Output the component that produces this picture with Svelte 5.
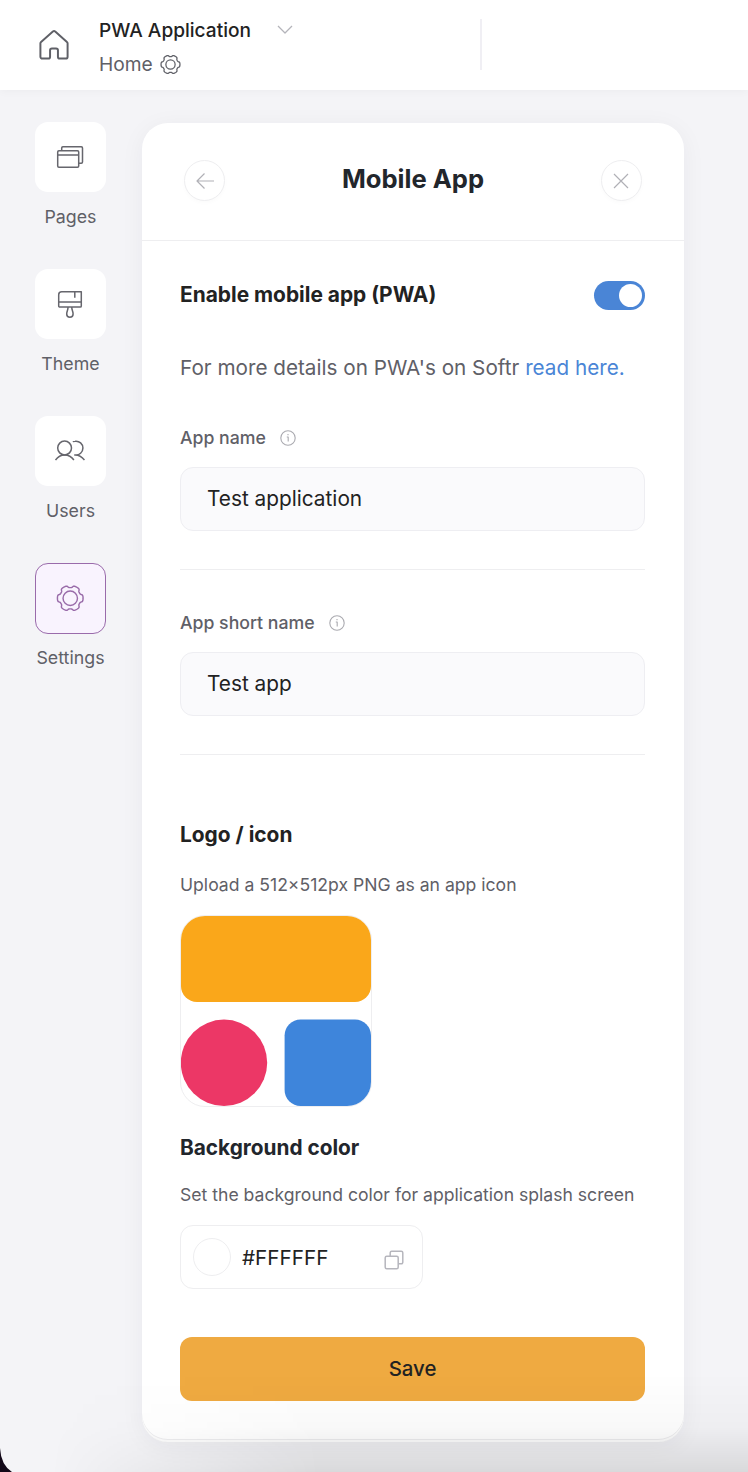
<script lang="ts">
  let enabled = true;
  let appName = 'Test application';
  let shortName = 'Test app';
  let color = '#FFFFFF';

  const menu = [
    { id: 'pages', label: 'Pages' },
    { id: 'theme', label: 'Theme' },
    { id: 'users', label: 'Users' },
    { id: 'settings', label: 'Settings' },
  ];
  let active = 'settings';

  // outline of the six-lobed gear, on a 30x30 box
  const gear = Array.from({ length: 120 }, (_, i) => {
    const a = (i / 120) * Math.PI * 2;
    const r = 12.3 + 1.2 * Math.tanh(2.6 * Math.cos(6 * a) + 0.9);
    return `${(15 + r * Math.cos(a)).toFixed(2)},${(15 + r * Math.sin(a)).toFixed(2)}`;
  }).join(' ');
</script>

<div class="page">
  <header class="topbar">
    <svg class="home" width="30" height="32" viewBox="0 0 32 34">
      <path
        d="M3.5 31.5a2 2 0 0 1-2-2V15.2a2 2 0 0 1 .7-1.5L14.8 2.5a2 2 0 0 1 2.5 0l12.5 11.2a2 2 0 0 1 .7 1.5v14.3a2 2 0 0 1-2 2h-6.3a2 2 0 0 1-2-2v-6.8a2 2 0 0 0-2-2h-4.400a2 2 0 0 0-2 2v6.800a2 2 0 0 1-2 2z"
      />
    </svg>
    <div class="names">
      <div class="app">
        <span>PWA Application</span>
        <svg class="chevron" width="16" height="10" viewBox="0 0 16 10">
          <path d="M1 1l7 7 7-7" />
        </svg>
      </div>
      <div class="current">
        <span>Home</span>
        <svg class="gear" width="21" height="21" viewBox="0 0 30 30">
          <polygon points={gear} />
          <circle cx="15" cy="15" r="6.6" />
        </svg>
      </div>
    </div>
    <div class="separator"></div>
  </header>

  <div class="content">
    <nav class="sidebar">
      {#each menu as item}
        <div class="item">
          <button
            class="tile"
            class:active={active === item.id}
            aria-label={item.label}
            on:click={() => (active = item.id)}
          >
            {#if item.id === 'pages'}
              <svg width="30" height="30" viewBox="0 0 30 30">
                <rect x="2.7" y="8.7" width="21" height="16.6" rx="1.2" />
                <path d="M2.7 13h21M6.7 8.7V6a1.2 1.2 0 0 1 1.2-1.2h18.4A1.2 1.2 0 0 1 27.5 6v14a1.2 1.2 0 0 1-1.2 1.2h-2.6" />
              </svg>
            {:else if item.id === 'theme'}
              <svg width="30" height="30" viewBox="0 0 30 30">
                <path d="M6.7 2.7h19.6v14.2a1.1 1.1 0 0 1-1.1 1.1H4.8a1.1 1.1 0 0 1-1.1-1.1V5.7a3 3 0 0 1 3-3zM3.7 13h22.6M19.8 2.7v6" />
                <path d="M13 18c.2 3-1.3 4.3-1.3 7a3.2 3.2 0 0 0 6.4 0c0-2.7-1.5-4-1.3-7" />
              </svg>
            {:else if item.id === 'users'}
              <svg width="30" height="30" viewBox="0 0 30 30">
                <circle cx="9.6" cy="12" r="6.9" />
                <path d="M.5 24c2.3-3.3 5.3-5.1 9.1-5.1s7 1.8 9.3 5.1M17.8 5.6a7 7 0 0 1 2.4-.4 6.9 6.9 0 1 1 0 13.7h-1M20.2 18.9c3.8 0 6.7 1.8 9.3 5.1" />
              </svg>
            {:else}
              <svg width="28.5" height="28.5" viewBox="0 0 30 30">
                <polygon points={gear} />
                <circle cx="15" cy="15" r="7.6" />
              </svg>
            {/if}
          </button>
          <span class="label">{item.label}</span>
        </div>
      {/each}
    </nav>

    <main class="panel">
      <div class="panel-head">
        <button class="round" aria-label="Back">
          <svg width="20" height="20" viewBox="0 0 20 20">
            <path d="M19 10H2M9.500 2.500L2 10l7.500 7.500" />
          </svg>
        </button>
        <h1>Mobile App</h1>
        <button class="round close" aria-label="Close">
          <svg width="20" height="20" viewBox="0 0 20 20">
            <path d="M3 3l14 14M17 3L3 17" />
          </svg>
        </button>
      </div>

      <div class="panel-body">
        <div class="enable">
          <h2>Enable mobile app (PWA)</h2>
          <button
            class="toggle"
            class:on={enabled}
            aria-label="Enable mobile app"
            on:click={() => (enabled = !enabled)}
          >
            <span class="knob"></span>
          </button>
        </div>

        <p class="details">
          For more details on PWA's on Softr <a href="#pwa">read here.</a>
        </p>

        <div class="field">
          <label for="app-name">
            App name
            <svg width="16" height="16" viewBox="0 0 16 16">
              <circle cx="8" cy="8" r="7.2" />
              <path d="M6.8 7h1.4v4.5M8 4v1.3" />
            </svg>
          </label>
          <input id="app-name" bind:value={appName} />
        </div>

        <div class="field">
          <label for="short-name">
            App short name
            <svg width="16" height="16" viewBox="0 0 16 16">
              <circle cx="8" cy="8" r="7.2" />
              <path d="M6.8 7h1.4v4.5M8 4v1.3" />
            </svg>
          </label>
          <input id="short-name" bind:value={shortName} />
        </div>

        <h2 class="logo-title">Logo / icon</h2>
        <p class="hint">Upload a 512×512px PNG as an app icon</p>
        <div class="logo">
          <svg width="190" height="190" viewBox="0 0 190 190">
            <rect width="190" height="86" rx="16" fill="#faa71a" />
            <circle cx="43" cy="146.8" r="43.2" fill="#ec3766" />
            <rect x="103.6" y="103.6" width="86.4" height="86.4" rx="16" fill="#3e85db" />
          </svg>
        </div>

        <h2 class="color-title">Background color</h2>
        <p class="hint">Set the background color for application splash screen</p>
        <div class="color">
          <span class="swatch" style="background-color: {color}"></span>
          <span class="hex">{color}</span>
          <svg width="20" height="20" viewBox="0 0 20 20">
            <rect x="1.2" y="6.2" width="13" height="12.6" rx="1.5" />
            <path d="M6.2 6V2.7a1.5 1.5 0 0 1 1.5-1.5h9.6a1.5 1.5 0 0 1 1.5 1.5v9.6a1.5 1.5 0 0 1-1.5 1.5h-3" />
          </svg>
        </div>

        <button class="save">Save</button>
      </div>
    </main>
  </div>
  <div class="shade"></div>
  <svg class="corner" width="12" height="24" viewBox="0 0 12 24">
    <path d="M0 0q1 17 12 24H0z" fill="#120818" />
  </svg>
</div>

<style>
  :global(body) {
    background: #f4f4f7;
  }

  .page {
    position: relative;
    height: 1472px;
    overflow: hidden;
    font-family: Inter, 'Liberation Sans', sans-serif;
    color: #222;
    background: #f4f4f7;
  }

  svg {
    display: block;
    flex: none;
    fill: none;
    stroke: currentColor;
    stroke-width: 1.5;
    stroke-linejoin: round;
  }

  button {
    padding: 0;
    font-family: inherit;
    cursor: pointer;
  }

  h1,
  h2,
  p {
    margin: 0;
  }

  .topbar {
    display: flex;
    height: 90px;
    background: #fff;
    box-shadow: 0 2px 8px rgba(0, 0, 0, 0.03);
  }

  .home {
    margin: 29px 30px 0 39px;
    color: #5f6067;
    stroke-width: 2.1;
  }

  .names {
    width: 381px;
    padding-top: 16px;
  }

  .app {
    display: flex;
    align-items: center;
    height: 28px;
    font-size: 19.1px;
    font-weight: 500;
  }

  .app span {
    width: 152px;
    white-space: nowrap;
  }

  .chevron {
    margin: -1px 0 0 26px;
    color: #b4b4ba;
    stroke-width: 1.3;
  }

  .current {
    display: flex;
    align-items: center;
    height: 28px;
    margin-top: 6px;
    font-size: 19.2px;
    color: #5f6067;
  }

  .gear {
    margin-left: 7px;
    stroke-width: 1.8;
  }

  .separator {
    width: 2px;
    height: 51px;
    margin-top: 19px;
    background: #f0eff4;
  }

  .content {
    display: flex;
    align-items: flex-start;
  }

  .sidebar {
    width: 142px;
    padding-top: 32px;
  }

  .item {
    display: flex;
    flex-direction: column;
    align-items: center;
    height: 147px;
    width: 141px;
  }

  .tile {
    display: flex;
    align-items: center;
    justify-content: center;
    box-sizing: border-box;
    width: 71px;
    height: 70px;
    padding-right: 1px;
    border: 0;
    border-radius: 13px;
    background: #fff;
    color: #66666d;
  }

  .tile.active {
    height: 71px;
    margin-bottom: -1px;
    padding-bottom: 1px;
    border: 1px solid #9a6bab;
    background: #f9f3fe;
    color: #996ba9;
  }

  .label {
    margin-top: 14px;
    font-size: 17.8px;
    line-height: 22px;
    color: #5f6067;
  }

  .panel {
    box-sizing: border-box;
    width: 542px;
    height: 1319px;
    margin-top: 33px;
    border-radius: 26px;
    background: #fff;
    box-shadow:
      inset 0 -2px 0 #fcfcfc,
      inset 0 -3px 0 #ececee,
      0 4px 24px rgba(30, 30, 60, 0.05);
  }

  .panel-head {
    display: flex;
    align-items: center;
    justify-content: space-between;
    box-sizing: border-box;
    height: 118px;
    padding: 0 42px 2px;
    border-bottom: 1px solid #eeeef0;
  }

  h1 {
    margin-top: -3px;
    font-size: 25.6px;
    font-weight: 700;
    line-height: 32px;
    color: #22262c;
  }

  .round {
    display: flex;
    align-items: center;
    justify-content: center;
    width: 41px;
    height: 41px;
    border: 1px solid #eeeef0;
    border-radius: 50%;
    background: #fff;
    color: #b0b0b6;
    box-shadow: 0 2px 4px rgba(0, 0, 0, 0.02);
  }

  .round svg {
    stroke-width: 1.2;
  }

  .panel-body {
    padding: 38px 39px 0 38px;
  }

  .enable {
    display: flex;
    align-items: center;
    justify-content: space-between;
    height: 32px;
  }

  h2 {
    font-size: 20.9px;
    font-weight: 700;
    line-height: 28px;
  }

  .toggle {
    width: 51px;
    height: 29px;
    padding: 3px;
    border: 0;
    border-radius: 15px;
    background: #c8c8ce;
  }

  .toggle.on {
    background: #4a85d6;
  }

  .knob {
    display: block;
    width: 23px;
    height: 23px;
    border-radius: 50%;
    background: #fff;
  }

  .on .knob {
    margin-left: 22px;
  }

  .details {
    margin-top: 43px;
    font-size: 20.7px;
    line-height: 28px;
    color: #5f6067;
    white-space: nowrap;
  }

  .details a {
    color: #4a85d6;
    text-decoration: none;
  }

  .field {
    height: 145px;
    margin-top: 41px;
    padding-bottom: 1px;
    border-bottom: 1px solid #eeeef0;
  }

  .field + .field {
    margin-top: 38px;
  }

  label {
    display: flex;
    align-items: center;
    gap: 14px;
    height: 28px;
    font-size: 17.7px;
    font-weight: 500;
    color: #5f6067;
  }

  label svg {
    margin-top: 2px;
    color: #aaaab0;
    stroke-width: 1.1;
  }

  input {
    display: block;
    box-sizing: border-box;
    width: 100%;
    height: 64px;
    margin-top: 16px;
    padding: 0 26px 2px;
    border: 1px solid #eeeef2;
    border-radius: 13px;
    background: #fafafc;
    color: #222;
    font-family: inherit;
    font-size: 20.8px;
  }

  .logo-title {
    margin-top: 66px;
  }

  .hint {
    margin-top: 24px;
    font-size: 17.6px;
    line-height: 24px;
    color: #5f6067;
    white-space: nowrap;
  }

  .logo {
    width: 190px;
    height: 190px;
    margin-top: 18px;
    overflow: hidden;
    border: 1px solid #eeeef0;
    border-radius: 25px;
  }

  .logo svg {
    stroke: none;
  }

  .color-title {
    margin-top: 27px;
    font-size: 20.8px;
    color: #22262c;
  }

  .color-title + .hint {
    margin-top: 21px;
  }

  .color {
    display: flex;
    align-items: center;
    box-sizing: border-box;
    width: 243px;
    height: 64px;
    margin-top: 18px;
    padding: 0 18px 0 12px;
    border: 1px solid #eeeef0;
    border-radius: 13px;
  }

  .swatch {
    box-sizing: border-box;
    width: 38px;
    height: 38px;
    border: 1px solid #eeeef0;
    border-radius: 50%;
  }

  .hex {
    flex: 1;
    margin-left: 11px;
    font-size: 20.7px;
  }

  .color svg {
    margin-top: 5px;
    color: #b6b6bd;
  }

  .save {
    display: block;
    width: 100%;
    height: 64px;
    margin-top: 48px;
    padding-bottom: 2px;
    border: 0;
    border-radius: 12px;
    background: #efaa41;
    color: #222;
    font-size: 20.4px;
    font-weight: 500;
  }

  .shade {
    position: absolute;
    inset: auto 0 0;
    height: 100px;
    background: linear-gradient(to bottom, transparent, rgba(0, 0, 0, 0.025) 55%, rgba(0, 0, 0, 0.11));
    mask-image: linear-gradient(to right, transparent 50px, #000 320px);
    pointer-events: none;
  }

  .corner {
    position: absolute;
    left: 0;
    bottom: 0;
    stroke: none;
  }
</style>
